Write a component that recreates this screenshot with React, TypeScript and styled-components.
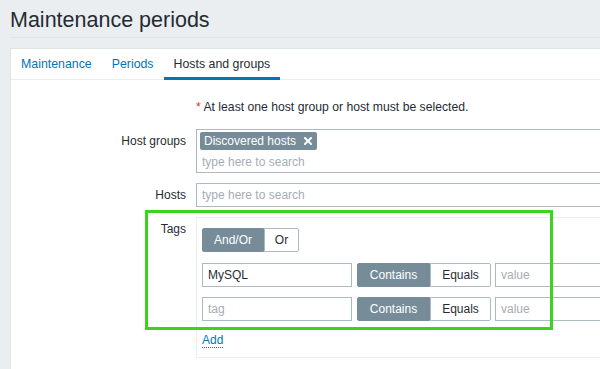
import React from 'react';
import styled, { createGlobalStyle } from 'styled-components';

const GlobalStyle = createGlobalStyle`
  html, body {
    margin: 0;
    padding: 0;
    overflow: hidden;
    background: #ebeef0;
  }
  body {
    font-family: "Liberation Sans", Arial, sans-serif;
    font-size: 12px;
    color: #1f2c33;
  }
`;

const Page = styled.div`
  position: relative;
  width: 760px;
  height: 369px;
  overflow: hidden;
`;

const Header = styled.header`
  margin: 0 0 0 10px;
  padding: 8px 0 5px;
  border-bottom: 1px solid #dfe4e7;
`;

const Title = styled.h1`
  margin: 0;
  font-size: 21.5px;
  font-weight: normal;
  line-height: 24px;
  color: #1f2c33;
`;

const Panel = styled.section`
  margin: 10px 0 0 10px;
  background: #fff;
  border: 1px solid #dfe4e7;
  height: 400px;
`;

const TabList = styled.nav`
  display: flex;
  border-bottom: 1px solid #ebeef0;
`;

const Tab = styled.a<{ $active?: boolean }>`
  display: block;
  padding: 8px 10px 6px;
  font-size: 12.35px;
  line-height: 14px;
  margin-bottom: -1px;
  border-bottom: 3px solid ${(p) => (p.$active ? '#0275b8' : 'transparent')};
  color: ${(p) => (p.$active ? '#1f2c33' : '#0275b8')};
  text-decoration: none;
  cursor: pointer;
`;

const Form = styled.div`
  display: grid;
  grid-template-columns: 175px 1fr;
  column-gap: 10px;
  row-gap: 10px;
  padding-top: 15px;
`;

const Label = styled.div`
  text-align: right;
  line-height: 24px;
`;

const Note = styled.div`
  font-size: 12.2px;
  line-height: 24px;
`;

const Asterisk = styled.span`
  color: #e33734;
`;

const MultiBox = styled.div`
  width: 453px;
  box-sizing: border-box;
  border: 1px solid #acbbc2;
  padding: 2px 3px 3px;
`;

const Chip = styled.span`
  display: inline-flex;
  align-items: center;
  gap: 8px;
  height: 18px;
  line-height: 18px;
  padding: 0 5px 0 4px;
  background: #768d99;
  color: #fff;
  border-radius: 2px;
`;

const SearchLine = styled.div`
  margin-top: 5px;
  padding-left: 2px;
  line-height: 14px;
  color: #a4adb3;
`;

const TextInput = styled.div<{ $width: number; $placeholder?: boolean }>`
  box-sizing: border-box;
  width: ${(p) => p.$width}px;
  height: 24px;
  line-height: 22px;
  padding: 0 5px;
  border: 1px solid #acbbc2;
  background: #fff;
  color: ${(p) => (p.$placeholder ? '#a4adb3' : '#1f2c33')};
  flex-shrink: 0;
`;

const TagBox = styled.div`
  width: 620px;
  border: 1px solid #ebeef0;
  padding: 10px 5px;
`;

const Segmented = styled.div<{ $gapAfter?: number }>`
  display: inline-flex;
  height: 24px;
  flex-shrink: 0;
  margin-right: ${(p) => p.$gapAfter ?? 0}px;
`;

const Segment = styled.span<{ $on?: boolean; $w: number }>`
  box-sizing: border-box;
  width: ${(p) => p.$w}px;
  height: 24px;
  line-height: 22px;
  text-align: center;
  border: 1px solid ${(p) => (p.$on ? '#768d99' : '#acbbc2')};
  background: ${(p) => (p.$on ? '#768d99' : '#fff')};
  color: ${(p) => (p.$on ? '#fff' : '#1f2c33')};
  &:first-child {
    border-radius: 2px 0 0 2px;
  }
  &:last-child {
    border-radius: 0 2px 2px 0;
  }
`;

const Operator = styled.div`
  display: flex;
  margin-bottom: 11px;
`;

const TagRow = styled.div`
  display: flex;
  align-items: center;
  margin-bottom: 10px;
  &:last-of-type {
    margin-bottom: 0;
  }
`;

const AddLine = styled.div`
  margin-top: 12px;
  line-height: 14px;
`;

const AddLink = styled.a`
  color: #0275b8;
  text-decoration: none;
  border-bottom: 1px dotted #0275b8;
  cursor: pointer;
`;

const Highlight = styled.div`
  position: absolute;
  left: 145px;
  top: 210px;
  width: 408px;
  height: 120px;
  box-sizing: border-box;
  border: 3px solid #3dd21e;
  pointer-events: none;
`;

function CloseIcon() {
  return (
    <svg width="8" height="8" viewBox="0 0 8 8">
      <path d="M1 1L7 7M7 1L1 7" stroke="#fff" strokeWidth="2" strokeLinecap="square" />
    </svg>
  );
}

const tags = [
  { tag: 'MySQL', value: '' },
  { tag: '', value: '' },
];

export default function App() {
  return (
    <Page>
      <GlobalStyle />
      <Header>
        <Title>Maintenance periods</Title>
      </Header>
      <Panel>
        <TabList>
          <Tab>Maintenance</Tab>
          <Tab>Periods</Tab>
          <Tab $active>Hosts and groups</Tab>
        </TabList>
        <Form>
          <div />
          <Note>
            <Asterisk>*</Asterisk> At least one host group or host must be selected.
          </Note>

          <Label>Host groups</Label>
          <MultiBox>
            <Chip>
              Discovered hosts
              <CloseIcon />
            </Chip>
            <SearchLine>type here to search</SearchLine>
          </MultiBox>

          <Label>Hosts</Label>
          <TextInput $width={453} $placeholder>
            type here to search
          </TextInput>

          <Label>Tags</Label>
          <TagBox>
            <Operator>
              <Segmented>
                <Segment $on $w={62}>And/Or</Segment>
                <Segment $w={35}>Or</Segment>
              </Segmented>
            </Operator>
            {tags.map((t, i) => (
              <TagRow key={i}>
                <TextInput $width={150} $placeholder={!t.tag} style={{ marginRight: 5 }}>
                  {t.tag || 'tag'}
                </TextInput>
                <Segmented $gapAfter={4}>
                  <Segment $on $w={73}>Contains</Segment>
                  <Segment $w={61}>Equals</Segment>
                </Segmented>
                <TextInput $width={150} $placeholder={!t.value}>
                  {t.value || 'value'}
                </TextInput>
              </TagRow>
            ))}
            <AddLine>
              <AddLink>Add</AddLink>
            </AddLine>
          </TagBox>
        </Form>
      </Panel>
      <Highlight />
    </Page>
  );
}
